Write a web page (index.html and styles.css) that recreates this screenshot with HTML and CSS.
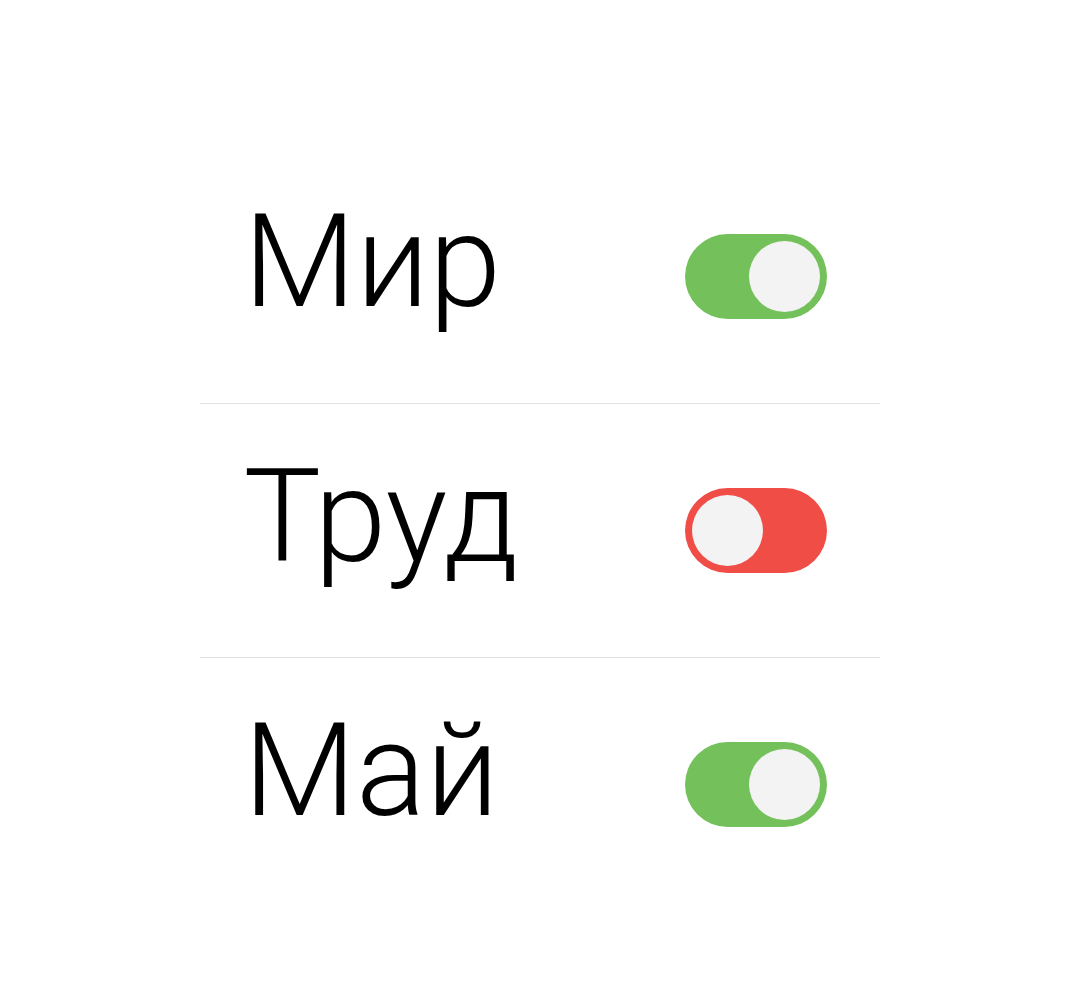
FILE: index.html
```html
<!DOCTYPE html>
<html lang="ru">
<head>
    <meta charset="UTF-8">
    <meta name="viewport" content="width=device-width, initial-scale=1.0">
    <title>Мир, Труд, Май</title>
    <link rel="stylesheet" href="styles.css">
</head>
<body>

    <div class="settings">
        <div class="row">
            <span class="label">Мир</span>
            <div class="switch on"><div class="knob"></div></div>
        </div>
        <div class="row">
            <span class="label">Труд</span>
            <div class="switch off"><div class="knob"></div></div>
        </div>
        <div class="row">
            <span class="label">Май</span>
            <div class="switch on"><div class="knob"></div></div>
        </div>
    </div>

</body>
</html>
```

FILE: styles.css
```css
body {
    margin: 0;
    padding: 0;
    background-color: #fff;
    font-family: Roboto, "Noto Sans", sans-serif;
}
.settings {
    width: 680px;
    margin: 149px auto 0;
}
.row {
    display: flex;
    justify-content: space-between;
    align-items: center;
    height: 254px;
    padding: 0 53px;
    box-sizing: border-box;
}
.row + .row {
    border-top: 1px solid #e2e2e2;
}
.label {
    font-size: 130px;
    font-weight: 300;
    line-height: 1;
    color: #000;
    margin: 0 0 28px -9px;
}
/* переключатель */
.switch {
    display: flex;
    width: 142px;
    height: 85px;
    padding: 7px;
    box-sizing: border-box;
    border-radius: 43px;
}
.switch.on {
    background-color: #74c15b;
    justify-content: flex-end;
}
.switch.off {
    background-color: #f04d47;
    justify-content: flex-start;
}
.knob {
    width: 71px;
    height: 71px;
    border-radius: 50%;
    background-color: #f3f3f3;
}
```
